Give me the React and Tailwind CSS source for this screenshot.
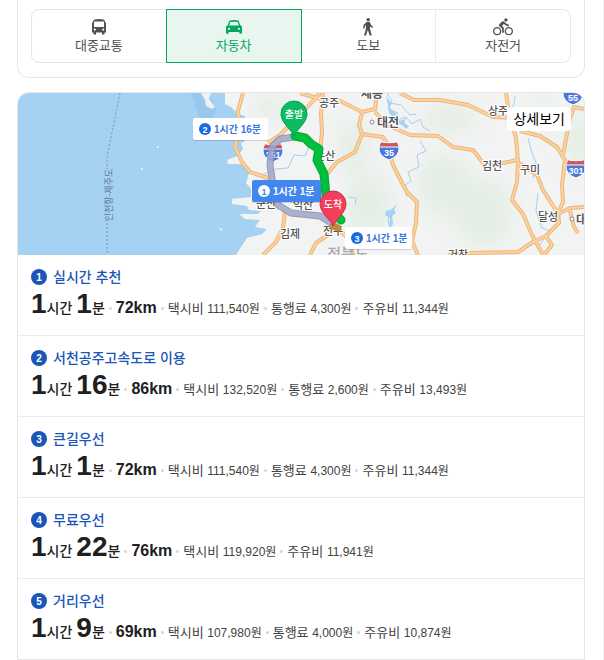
// App.jsx
// Directions search result: travel mode tabs, route map and list of car routes

import { useState } from 'react'
import { MdDirectionsBike } from 'react-icons/md'

// --- DATA ---

const routes = [
  {
    name: '실시간 추천', hours: 1, minutes: 1, distance: '72km',
    costs: [['택시비', '111,540원'], ['통행료', '4,300원'], ['주유비', '11,344원']],
  },
  {
    name: '서천공주고속도로 이용', hours: 1, minutes: 16, distance: '86km',
    costs: [['택시비', '132,520원'], ['통행료', '2,600원'], ['주유비', '13,493원']],
  },
  {
    name: '큰길우선', hours: 1, minutes: 1, distance: '72km',
    costs: [['택시비', '111,540원'], ['통행료', '4,300원'], ['주유비', '11,344원']],
  },
  {
    name: '무료우선', hours: 1, minutes: 22, distance: '76km',
    costs: [['택시비', '119,920원'], ['주유비', '11,941원']],
  },
  {
    name: '거리우선', hours: 1, minutes: 9, distance: '69km',
    costs: [['택시비', '107,980원'], ['통행료', '4,000원'], ['주유비', '10,874원']],
  },
]

// Roads on the map, each one is an svg path
const roads = [
  'M225 0L220 18L222 35L217 54L224 69L232 79L250 85L256 95',
  'M302 0L285 19L262 42L250 50',
  'M282 0L302 6L322 8L344 19L357 16L359 0',
  'M305 0L303 20L304 39L302 60',
  'M344 20L341 32L344 41L337 59L319 69L309 81',
  'M343 41L365 44L370 52L375 72L384 90L389 99L399 109L398 130L394 148L400 162',
  'M357 19L369 32L392 42L420 43L435 54L455 57L465 70L485 70L499 67',
  'M382 0L396 7L422 7L450 12L475 24L495 25',
  'M488 0L491 20L498 45L500 69L499 89L494 107L505 121L514 142L525 162',
  'M502 38L522 43L539 54L547 67L544 92L545 109L540 120L541 130L528 143L515 149L500 159L449 160L430 162',
  'M499 69L519 82L525 97L539 119',
  'M545 62L552 25L556 14L566 16',
  'M540 121L552 115L566 114',
  'M552 118L556 134L560 140',
  'M267 118L265 135L258 149L245 162',
  'M316 128L310 142L298 150L292 162',
  'M320 136L330 145L335 162',
  'M528 143L534 152L526 162',
]

// Rivers and lakes
const rivers = [
  'M369 0L374 8L370 16L380 20L376 28L388 24L394 31L402 26L405 34L412 38',
  'M372 10L383 12L392 22L398 21',
  'M402 48L408 58L399 62L401 74L390 79L393 88L386 93L389 104',
  'M372 118L370 128L374 142L371 148',
  'M510 45L514 60L519 72L515 85',
  'M520 100L518 118L524 135L532 138L526 146L520 154',
  'M497 3L496 12L490 18',
  'M239 84L258 76L270 75L276 62L287 63L291 54',
  'M330 104L338 105L337 112',
]

const places = [
  { name: '공주', x: 311, y: 14, size: 11 },
  { name: '세종', x: 354, y: 5, size: 12, bold: true },
  { name: '대전', x: 370, y: 34, size: 12, bold: true },
  { name: '논산', x: 307, y: 67, size: 11 },
  { name: '상주', x: 480, y: 22, size: 11 },
  { name: '김천', x: 474, y: 77, size: 11 },
  { name: '구미', x: 512, y: 81, size: 11 },
  { name: '달성', x: 530, y: 128, size: 11 },
  { name: '대구', x: 569, y: 131, size: 12, bold: true },
  { name: '거창', x: 440, y: 166, size: 11 },
  { name: '김제', x: 272, y: 145, size: 11 },
  { name: '군산', x: 248, y: 115, size: 11 },
  { name: '익산', x: 285, y: 116, size: 11 },
  { name: '전주', x: 315, y: 142, size: 11 },
]

// --- ICONS ---

function BusIcon() {
  return (
    <svg viewBox="0 0 14 16" className="h-4 w-[14px]" fill="currentColor" aria-hidden="true">
      <path
        fillRule="evenodd"
        d="M2.500 0.500Q7 -0.300 11.500 0.500L13 2V3.500H14V13.500H12.500V15.500H10V13.500H4V15.500H1.500V13.500H0V3.500H1V2ZM2 2.500V8H12V2.500ZM2.800 9.500A1.100 1.100 0 1 0 2.800 11.700A1.100 1.100 0 1 0 2.800 9.500ZM11.200 9.500A1.100 1.100 0 1 0 11.200 11.700A1.100 1.100 0 1 0 11.200 9.500Z"
      />
    </svg>
  )
}

function CarIcon() {
  return (
    <svg viewBox="0 0 16 14" className="h-[14px] w-4" fill="currentColor" aria-hidden="true">
      <path
        fillRule="evenodd"
        d="M3.500 0.500Q8 -0.500 12.500 0.500L14.200 5L16 6.500V13Q16 13.800 15.200 13.800H14Q13.300 13.800 13.300 13V12H2.700V13Q2.700 13.800 2 13.800H0.800Q0 13.800 0 13V6.500L1.800 5ZM4.300 2L3.200 5.500H12.800L11.700 2Q8 1.300 4.300 2ZM3 7.700A1.100 1.100 0 1 0 3 9.900A1.100 1.100 0 1 0 3 7.700ZM13 7.700A1.100 1.100 0 1 0 13 9.900A1.100 1.100 0 1 0 13 7.700Z"
      />
    </svg>
  )
}

function WalkIcon() {
  return (
    <svg viewBox="0 0 10 18" className="h-[18px] w-[10px]" fill="currentColor" aria-hidden="true">
      <circle cx="5.200" cy="1.700" r="1.700" />
      <path d="M3.500 4H6.800L8.200 7.200L10 8.600L9.300 9.900L7 8.500V11L8.800 17.500H6.800L4.800 12L3 17.500H1L2.900 11V7L1.900 8.200L1.600 10.500H0.200L0.500 7Z" />
    </svg>
  )
}

const modes = [
  { id: 'transit', label: '대중교통', icon: <BusIcon /> },
  { id: 'car', label: '자동차', icon: <CarIcon /> },
  { id: 'walk', label: '도보', icon: <WalkIcon /> },
  { id: 'bike', label: '자전거', icon: <MdDirectionsBike size={20} aria-hidden="true" /> },
]

// --- MAP PARTS ---

// Highway number shield
function Shield({ x, y, number }) {
  return (
    <g transform={`translate(${x} ${y})`}>
      <path d="M-8 -9Q0 -7 8 -9L10 -4Q11 5 0 9Q-11 5 -10 -4Z" fill="#4b78d8" stroke="#fff" strokeWidth="1" />
      <path d="M-8 -8.500Q0 -6.500 8 -8.500L9.300 -4.500H-9.300Z" fill="#d9534f" />
      <path d="M-9.500 -4H9.500" stroke="#fff" strokeWidth="1" />
      <text y="5" textAnchor="middle" fontSize="9" fontWeight="700" fill="#fff">{number}</text>
    </g>
  )
}

// Start / end pin, the tip is at x, y
function Pin({ x, y, label, color, edge }) {
  return (
    <g transform={`translate(${x} ${y})`}>
      <path
        d="M0 0C-2 -6 -13 -13 -13 -22A13 13 0 0 1 13 -22C13 -13 2 -6 0 0Z"
        fill={color}
        stroke={edge}
        strokeWidth="1"
      />
      <text y="-18" textAnchor="middle" fontSize="10" fontWeight="500" fill="#fff">{label}</text>
    </g>
  )
}

// Time box next to a route line
function TimeLabel({ x, y, width, number, text, active }) {
  const back = active ? '#4287f0' : '#fff'
  const front = active ? '#fff' : '#176be0'
  return (
    <g transform={`translate(${x} ${y})`}>
      <rect y="1" width={width} height="22" rx="2" fill="#00000026" />
      <rect width={width} height="22" rx="2" fill={back} />
      <circle cx="12" cy="11" r="6" fill={front} />
      <text x="12" y="15" textAnchor="middle" fontSize="9" fontWeight="700" fill={back}>{number}</text>
      <text x="21" y="15" fontSize="10" fontWeight="700" fill={active ? '#fff' : '#3d79db'}>{text}</text>
    </g>
  )
}

function RouteMap() {
  return (
    <svg
      viewBox="0 0 566 162"
      preserveAspectRatio="xMidYMid slice"
      className="block h-auto w-full"
      role="img"
      aria-label="경로 지도"
    >
      <defs>
        <filter id="soft">
          <feGaussianBlur stdDeviation="9" />
        </filter>
      </defs>

      {/* Sea and land */}
      <rect width="566" height="162" fill="#a5d1f2" />
      <path d="M173 0H191L198 16L190 40L179 18Z" fill="#99c8ee" />
      <path d="M183 0H193L191 6L197 14L194 16L188 13L187 7Z" fill="#edf2f3" />
      <path d="M207 0V11L213 14L220 21L227 23V48L223 50L225 56L219 63L209 67L210 71L223 71L231 80L228 90L233 96V104L214 106V111L229 113L231 117L243 118L240 121L221 121L227 126L242 127L237 134L249 136L244 141L229 145L223 154L218 162H566V0Z" fill="#f2f4f3" />
      <path d="M201 135L205 136L203 138Z" fill="#edf2f3" />
      <circle cx="140" cy="54" r="1" fill="#e8f8fb" />
      <circle cx="124" cy="76" r="1" fill="#e8f8fb" />

      {/* Mountain areas */}
      <g fill="#d7e8d5" filter="url(#soft)" opacity="0.5">
        <ellipse cx="252" cy="16" rx="14" ry="12" />
        <ellipse cx="336" cy="55" rx="14" ry="28" />
        <ellipse cx="350" cy="112" rx="22" ry="30" />
        <ellipse cx="426" cy="92" rx="26" ry="30" />
        <ellipse cx="432" cy="26" rx="28" ry="12" />
        <ellipse cx="465" cy="120" rx="28" ry="34" />
        <ellipse cx="525" cy="22" rx="14" ry="12" />
        <ellipse cx="560" cy="48" rx="12" ry="30" />
      </g>

      {/* Ferry line */}
      <path d="M102 0L89 64V76M89 130V162" fill="none" stroke="#6f9bc4" strokeWidth="1" strokeDasharray="2 2" />
      <text transform="translate(94 102) rotate(-90)" textAnchor="middle" fontSize="9" fill="#5b7797">인천항-제주도</text>

      {/* Rivers */}
      <g fill="none" stroke="#a4cff0" strokeWidth="1" strokeLinejoin="round">
        {rivers.map((d) => <path key={d} d={d} />)}
      </g>
      <path d="M368 3L373 10L372 15L379 21L376 23L383 28L388 25L386 30L391 33L388 36L384 32L379 30L376 25L371 20L370 12Z M368 118L374 116L379 111L376 117L378 120L374 123L375 131L371 137L372 125L367 122Z" fill="#a5d1f2" />

      {/* Roads: darker edge first, lighter centre on top */}
      <g fill="none" stroke="#eeb478" strokeWidth="4" strokeLinejoin="round">
        {roads.map((d) => <path key={d} d={d} />)}
      </g>
      <g fill="none" stroke="#fbd3a0" strokeWidth="2" strokeLinejoin="round">
        {roads.map((d) => <path key={d} d={d} />)}
      </g>

      <Shield x={255} y={60} number="151" />
      <Shield x={371} y={58} number="35" />
      <Shield x={558} y={76} number="301" />
      <Shield x={555} y={3} number="55" />

      {/* Place names */}
      <g textAnchor="middle" fill="#555" stroke="#fff" strokeWidth="2" paintOrder="stroke">
        {places.map((place) => (
          <text key={place.name} x={place.x} y={place.y} fontSize={place.size} fontWeight={place.bold ? 700 : 500}>
            {place.name}
          </text>
        ))}
      </g>
      <text x="330" y="166" textAnchor="middle" fontSize="15" fontWeight="500" fill="#aaa">전북도</text>
      <circle cx="354" cy="29" r="2" fill="#fff" stroke="#888" />
      <circle cx="554" cy="126" r="2" fill="#fff" stroke="#888" />

      {/* Route lines */}
      <g fill="none" strokeLinecap="round" strokeLinejoin="round">
        <g opacity="0.85">
          <path d="M276 44L262 46L254 54L252 72L255 92L260 112L273 120L302 123L315 131" stroke="#858bb0" strokeWidth="7" />
          <path d="M276 44L262 46L254 54L252 72L255 92L260 112L273 120L302 123L315 131" stroke="#a0a6cb" strokeWidth="5" />
        </g>
        <path d="M315 133L320 135" stroke="#c08a3e" strokeWidth="7" />
        <path d="M277 43L287 45L293 51L301 56L299 67L306 81L308 103L316 120L323 127" stroke="#04a83a" strokeWidth="9" />
        <path d="M277 43L287 45L293 51L301 56L299 67L306 81L308 103L316 120L323 127" stroke="#00bf3b" strokeWidth="7" />
      </g>

      <TimeLabel x={175} y={25} width={75} number={2} text="1시간 16분" />
      <TimeLabel x={234} y={87} width={69} number={1} text="1시간 1분" active />
      <TimeLabel x={327} y={134} width={67} number={3} text="1시간 1분" />

      <Pin x={276} y={43} label="출발" color="#0bbd62" edge="#079a4e" />
      <Pin x={315} y={133} label="도착" color="#f23f5b" edge="#cc2f49" />
    </svg>
  )
}

// --- LIST ---

// Small gray dot between the values
function Dot() {
  return <span className="mx-1 mb-[3px] inline-block size-[3px] rounded-full bg-gray-300" />
}

function RouteItem({ route, number }) {
  return (
    <li className="border-b border-[#ececec] last:border-b-0">
      <a href="#route" className="block px-[13px] pt-3 pb-[14px]">
        <div className="flex items-center gap-[6px]">
          <span className="flex size-4 items-center justify-center rounded-full bg-[#1a56b8] text-[10px] font-bold text-white">
            {number}
          </span>
          <span className="text-sm leading-5 font-medium text-[#1a56b8]">{route.name}</span>
        </div>
        <div className="flex items-baseline leading-[34px] whitespace-nowrap text-[#202020]">
          <strong className="text-[28px]">{route.hours}</strong>
          <span className="mr-1 text-sm leading-none font-medium">시간</span>
          <strong className="text-[28px]">{route.minutes}</strong>
          <span className="text-sm leading-none font-medium">분<Dot /></span>
          <strong className="text-base leading-none">{route.distance}</strong>
          {route.costs.map(([label, amount]) => (
            <span key={label} className="text-[13px] leading-none text-[#424242]">
              <Dot />
              {label} <span className="text-xs leading-none">{amount}</span>
            </span>
          ))}
        </div>
      </a>
    </li>
  )
}

function App() {
  const [mode, setMode] = useState('car')

  return (
    <main className="min-h-screen border-r border-[#ececec] bg-white pr-[18px] pl-[17px] font-['Liberation_Sans','Noto_Sans_CJK_KR',sans-serif]">

      {/* Travel mode tabs */}
      <section className="rounded-b-xl border-x border-b border-[#e5e5e5] px-[13px] pt-[9px] pb-[14px]">
        <div className="flex h-[54px] rounded-lg border border-[#e5e5e5]">
          {modes.map((item) => (
            <button
              key={item.id}
              type="button"
              aria-pressed={mode === item.id}
              onClick={() => setMode(item.id)}
              className={
                mode === item.id
                  ? '-my-px -ml-px flex flex-1 flex-col items-center border border-[#03a95c] bg-[#e9f6f0] text-[13px] leading-5 text-[#03a95c]'
                  : 'flex flex-1 flex-col items-center border-r border-[#ececec] text-[13px] leading-5 text-[#505050] last:border-r-0'
              }
            >
              <span className="flex h-[26px] items-center pt-[7px]">{item.icon}</span>
              {item.label}
            </button>
          ))}
        </div>
      </section>

      {/* Map + route list */}
      <section className="mt-[14px] overflow-hidden rounded-t-xl border border-[#e5e5e5]">
        <div className="relative">
          <RouteMap />
          <button
            type="button"
            className="absolute top-[14px] right-[13px] rounded bg-white px-[6px] text-sm leading-6 text-black"
          >
            상세보기
          </button>
        </div>
        <ul>
          {routes.map((route, index) => (
            <RouteItem key={route.name} route={route} number={index + 1} />
          ))}
        </ul>
      </section>

    </main>
  )
}

export default App
